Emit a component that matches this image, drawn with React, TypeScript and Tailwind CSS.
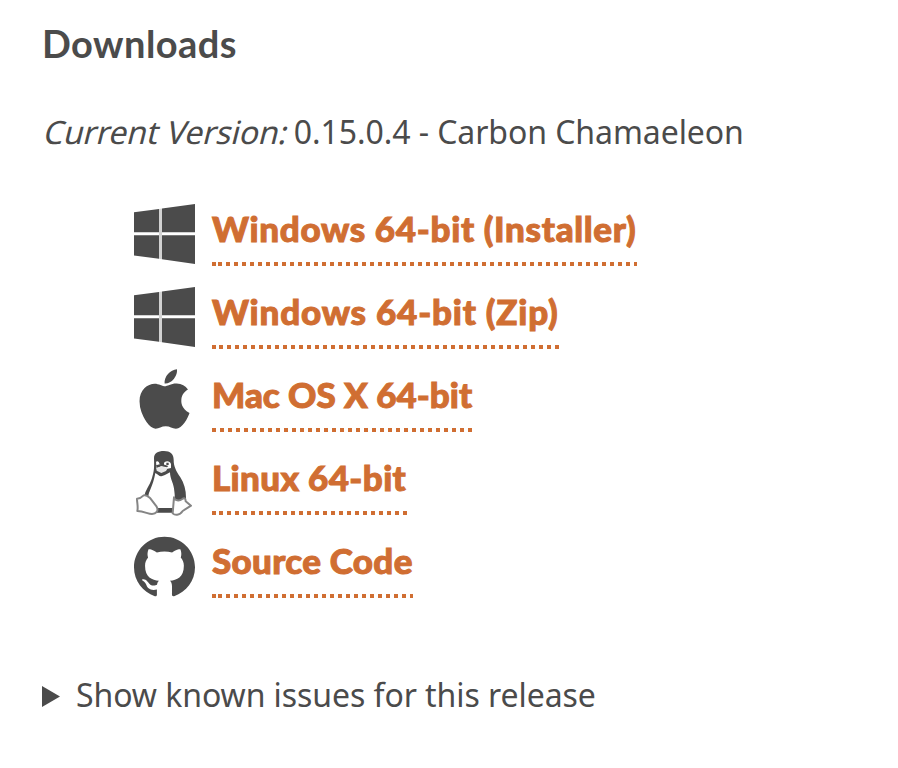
import type { ReactNode } from 'react';
import { FaApple } from 'react-icons/fa';

const Windows = () => (
  <svg viewBox="0 0 61 60" className="h-[60px] w-[61px]" fill="currentColor">
    <path d="M0 8.3 25 5v23.3H0zM28 4.5 61 0v28.3H28zM0 31.2h25v23.6L0 51.6zM28 31.2h33V60l-33-4.7z" />
    <path d="M25 5 28 4.5v50.8l-3-.5z" opacity=".25" />
  </svg>
);

const Apple = () => <FaApple className="-mt-[2px] h-[68px] w-[51px]" preserveAspectRatio="none" />;

const Tux = () => (
  <svg viewBox="0 0 168 195" className="h-[65px] w-[56px]">
    <path fill="#4b4b4b" d="M54 22C54 6 65 0 84 0s29 9 29 26c0 20 7 33 20 53 12 18 18 42 17 67l-25 32H58l-32-44c0-14 15-29 22-53 6-20 7-28 6-59z" />
    <path fill="#fff" d="M58 66c7 3 12 11 18 10s14-6 26-12c0 21 12 33 13 57 3 22 1 40-3 49-7 6-41 6-49 1l-26-34c1-17 13-28 21-71z" />
    <path fill="#fff" d="M60 32c5-4 9 0 11 8h12c0-10 18-14 22-1v12l-10 2-18-3-15 5z" />
    <path fill="#4b4b4b" d="m60 43 17-5 20 7-4 4-17-3-13 5zM79 34h5v8h-5zM91 35h7v7h-7zM62 171h51v14H62z" />
    <path fill="#e8e8e8" d="m61 51 15-5 19 6-5 8-14 6-14-7z" />
    <path fill="#fff" stroke="#858585" strokeWidth="6" strokeLinejoin="round" d="M3 143c8 0 13-3 20-10 8-3 12 2 20 9l19 25c7 13-2 22-14 22-12 0-23-8-44-9 3-12-1-25-1-37zM114 139c2 10 15 12 25 5 6-5 10-2 10 7l16 13-25 16c-10 15-24 13-30 7z" />
  </svg>
);

const GitHub = () => (
  <svg viewBox="0 0 24 24" className="h-[61px] w-[61px]" fill="currentColor">
    <path d="M12 .297c-6.63 0-12 5.373-12 12 0 5.303 3.438 9.8 8.205 11.385.6.113.82-.258.82-.577 0-.285-.01-1.04-.015-2.04-3.338.724-4.042-1.61-4.042-1.61C4.422 18.07 3.633 17.7 3.633 17.7c-1.087-.744.084-.729.084-.729 1.205.084 1.838 1.236 1.838 1.236 1.07 1.835 2.809 1.305 3.495.998.108-.776.417-1.305.76-1.605-2.665-.3-5.466-1.332-5.466-5.93 0-1.31.465-2.38 1.235-3.22-.135-.303-.54-1.523.105-3.176 0 0 1.005-.322 3.3 1.23.96-.267 1.98-.399 3-.405 1.02.006 2.04.138 3 .405 2.28-1.552 3.285-1.23 3.285-1.23.645 1.653.24 2.873.12 3.176.765.84 1.23 1.91 1.23 3.22 0 4.61-2.805 5.625-5.475 5.92.42.36.81 1.096.81 2.22 0 1.606-.015 2.896-.015 3.286 0 .315.21.69.825.57C20.565 22.092 24 17.592 24 12.297c0-6.627-5.373-12-12-12" />
  </svg>
);

interface RowProps {
  icon: ReactNode;
  label: string;
  width: string;
  dots: string;
  text?: string;
}

function Row({ icon, label, width, dots, text = '' }: RowProps) {
  return (
    <li className="flex h-[83px] items-start">
      <div className="flex h-[68px] w-[62px] items-center justify-center">{icon}</div>
      <a href="#" className={'ml-[17px] block whitespace-nowrap text-[#d06e32] ' + width}>
        <span className={"block h-[62px] font-['Lato',sans-serif] text-[35px] font-black leading-[57px] [-webkit-text-stroke:1px_#d06e32] " + text}>{label}</span>
        <span className="flex h-1">
          <span className="w-1 bg-[#d06e32]" />
          <span className={'flex-1 bg-[repeating-linear-gradient(to_right,transparent_0_4px,#d06e32_4px_8px)] ' + dots} />
        </span>
      </a>
    </li>
  );
}

export default function App() {
  return (
    <main className="h-[768px] w-[898px] overflow-hidden bg-white px-[42px] pt-[18px] font-['Noto_Sans',sans-serif] text-[#4b4b4b]">
      <h2 className="h-[54px] font-['Lato',sans-serif] text-[38px] font-bold leading-[51px] tracking-[0.45px]">Downloads</h2>
      <p className="mt-[36px] h-[48px] whitespace-nowrap text-[32px] leading-[48px] tracking-[-0.07px]">
        <span className="inline-block translate-x-[3px] -skew-x-[14deg]">Current Version:</span> 0.15.0.4 - Carbon Chamaeleon
      </p>
      <ul className="ml-[91px] mt-[44px]">
        <Row icon={<Windows />} label="Windows 64-bit (Installer)" width="w-[425px]" dots="-ml-[2px]" text="tracking-[0.66px]" />
        <Row icon={<Windows />} label="Windows 64-bit (Zip)" width="w-[347px]" dots="-ml-[1px]" text="tracking-[0.8px]" />
        <Row icon={<Apple />} label="Mac OS X 64-bit" width="w-[261px]" dots="ml-0" />
        <Row icon={<Tux />} label="Linux 64-bit" width="w-[195px]" dots="-ml-[1px]" text="tracking-[0.35px]" />
        <Row icon={<GitHub />} label="Source Code" width="w-[201px]" dots="-ml-[2px]" text="tracking-[0.3px]" />
      </ul>
      <div className="mt-[56px] flex h-[48px] items-center whitespace-nowrap text-[32px] leading-[48px] tracking-[-0.07px]">
        <svg viewBox="0 0 18 21" className="mr-[16px] mt-[2px] h-[21px] w-[18px]" fill="currentColor"><path d="M0 0 18 10.5 0 21z" /></svg>
        Show known issues for this release
      </div>
    </main>
  );
}
